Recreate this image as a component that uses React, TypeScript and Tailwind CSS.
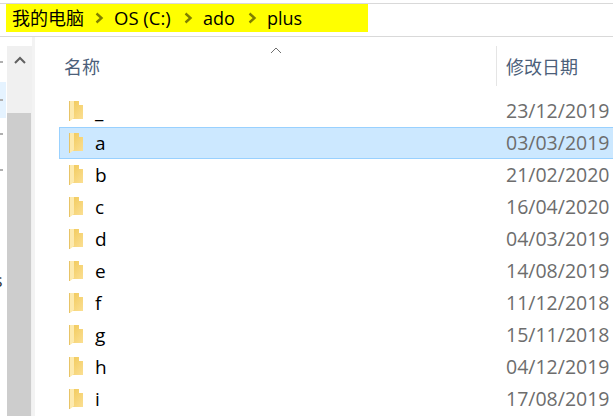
import React from 'react';

const FONT = "font-['Open_Sans','Noto_Sans_CJK_SC',sans-serif]";

const rows = [
  { name: '_', date: '23/12/2019' },
  { name: 'a', date: '03/03/2019', selected: true },
  { name: 'b', date: '21/02/2020' },
  { name: 'c', date: '16/04/2020' },
  { name: 'd', date: '04/03/2019' },
  { name: 'e', date: '14/08/2019' },
  { name: 'f', date: '11/12/2018' },
  { name: 'g', date: '15/11/2018' },
  { name: 'h', date: '04/12/2019' },
  { name: 'i', date: '17/08/2019' },
];

const FolderIcon = () => (
  <svg width="14" height="21" viewBox="0 0 14 21" className="shrink-0">
    <defs>
      <linearGradient id="body" x1="0" y1="0" x2="1" y2="1">
        <stop offset="0" stopColor="#f0c755" />
        <stop offset="1" stopColor="#fbdf92" />
      </linearGradient>
    </defs>
    <path d="M0 0h10v4h4v14H3z" fill="url(#body)" />
    <path d="M0 0h5v17l-4 3H0z" fill="#fdeaae" />
    <path d="M.5 0v20" stroke="#e8c467" strokeWidth="1" />
  </svg>
);

const Sep = () => (
  <svg width="9" height="12" viewBox="0 0 9 12" className="block shrink-0">
    <path d="M1.5 1.5 6.5 6l-5 4.5" fill="none" stroke="#7f7f00" strokeWidth="2.4" />
  </svg>
);

const NavMark = () => <div className="h-[2px] w-[3px] bg-[#b0b0b0]" />;

const Row = ({ name, date, selected }: { name: string; date: string; selected?: boolean }) => (
  <div className={`flex h-8 items-center border ${selected ? 'bg-[#cce8ff] border-[#99d1ff]' : 'border-transparent'}`}>
    <div className="ml-[9px] flex w-[26px] items-center">
      <FolderIcon />
    </div>
    <span className="w-[411px] text-[19px] leading-8 text-black">{name}</span>
    <span className="text-[19.5px] leading-8 whitespace-nowrap text-[#6d6d6d]">{date}</span>
  </div>
);

export default function App() {
  return (
    <div className={`flex h-[416px] w-[613px] flex-col overflow-hidden bg-white ${FONT}`}>
      <div className="mt-[3px] flex h-[34px] shrink-0 items-start border-y border-[#d9d9d9]">
        <div className="ml-[6px] flex h-[28px] w-[362px] items-center bg-[#ffff00] pl-[6px] text-[18px] text-black">
          <span className="w-[72px] whitespace-nowrap">我的电脑</span>
          <span className="mr-[10px] ml-[11px]"><Sep /></span>
          <span className="w-[58px] text-[18.5px] whitespace-nowrap">OS (C:)</span>
          <span className="mr-[10px] ml-[12px]"><Sep /></span>
          <span className="w-[33px]">ado</span>
          <span className="mr-[10px] ml-[12px]"><Sep /></span>
          <span>plus</span>
        </div>
      </div>

      <div className="flex min-h-0 flex-1">
        {/* nav pane cut off at the left */}
        <div className="flex w-[7px] shrink-0 flex-col pt-[24px]">
          <NavMark />
          <div className="mt-[19px] flex h-[36px] w-[6px] flex-col justify-center bg-[#e5f3ff]"><NavMark /></div>
          <div className="mt-[15px]"><NavMark /></div>
          <div className="mt-[34px]"><NavMark /></div>
          <div className="mt-[99px] -ml-[6px] overflow-hidden text-[18px] leading-5 text-[#333]">s</div>
        </div>

        {/* scrollbar */}
        <div className="mt-[9px] flex w-[25px] shrink-0 flex-col bg-[#f0f0f0]">
          <div className="flex h-[67px] shrink-0 items-start justify-center pt-[10px]">
            <svg width="12" height="8" viewBox="0 0 12 8">
              <path d="M1 7 6 2l5 5" fill="none" stroke="#606060" strokeWidth="2" />
            </svg>
          </div>
          <div className="w-[24px] flex-1 bg-[#cdcdcd]" />
        </div>
        <div className="w-[3px] shrink-0 bg-[#f3f3f3]" />

        {/* file list */}
        <div className="min-w-0 flex-1">
          <div className="relative mt-[9px] flex h-[40px] items-center text-[18px] text-[#4c607a]">
            <span className="absolute top-px left-[235px] text-[#707070]">
              <svg width="12" height="7" viewBox="0 0 12 7" className="block">
                <path d="M1 6 6 1l5 5" fill="none" stroke="currentColor" strokeWidth="1" />
              </svg>
            </span>
            <span className="mt-[2px] ml-[29px] w-[432px] whitespace-nowrap">名称</span>
            <span className="flex h-[40px] items-center border-l border-[#e5e5e5] pt-[2px] pl-[9px] whitespace-nowrap">修改日期</span>
          </div>
          <div className="mt-[9px] -mr-[20px] ml-[24px] overflow-hidden">
            {rows.map((r) => (
              <Row key={r.name} {...r} />
            ))}
          </div>
        </div>
      </div>
    </div>
  );
}
